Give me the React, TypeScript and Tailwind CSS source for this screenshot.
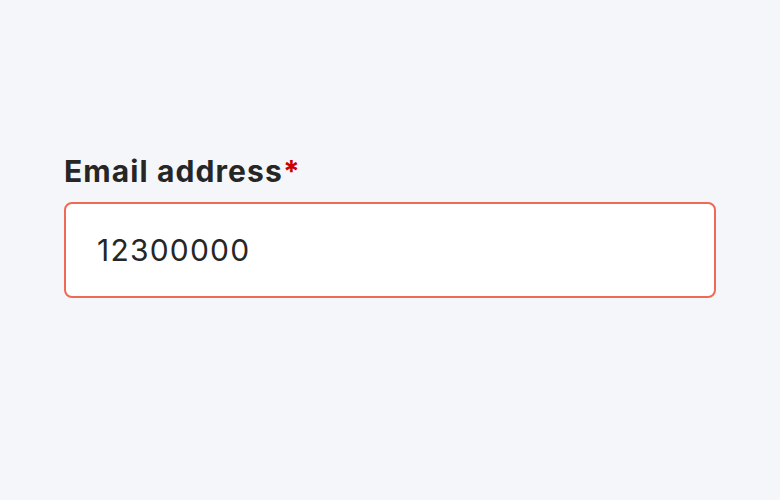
export default function App() {
  return (
    <div
      className="flex h-[500px] w-[780px] flex-col bg-[#f5f6fa] px-16 pt-[150px]"
      style={{ fontFamily: 'Inter, "Noto Sans", sans-serif' }}
    >
      <label className="text-[30px] font-bold leading-[42px] tracking-[1.1px] text-[#262626]">
        Email address<span className="text-[#cc0000]">*</span>
      </label>
      <div className="mt-[10px] flex h-[96px] w-[652px] items-center rounded-[8px] border-2 border-[#ee6a55] bg-white px-[31px]">
        <span className="text-[30px] tracking-[1.2px] text-[#262626]">12300000</span>
      </div>
    </div>
  );
}
